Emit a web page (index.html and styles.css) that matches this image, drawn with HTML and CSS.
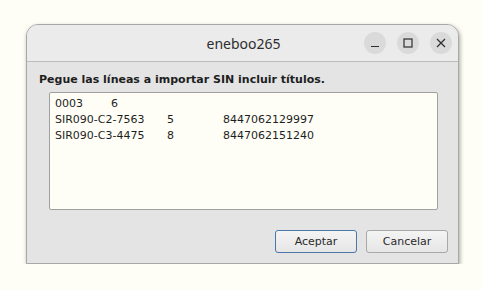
FILE: index.html
```html
<!DOCTYPE html>
<html lang="es">
<head>
    <meta charset="UTF-8">
    <title>eneboo265</title>
    <link rel="stylesheet" href="styles.css">
</head>
<body>

    <div class="ventana">
        <div class="titulo">
            <span class="titulo-texto">eneboo265</span>
            <div class="controles">
                <span class="control">
                    <svg width="10" height="10" viewBox="0 0 10 10"><path d="M1 8.5h8" stroke="#2e2e2e" stroke-width="1.2"/></svg>
                </span>
                <span class="control">
                    <svg width="10" height="10" viewBox="0 0 10 10"><rect x="1" y="1" width="8" height="8" fill="none" stroke="#2e2e2e" stroke-width="1.2"/></svg>
                </span>
                <span class="control">
                    <svg width="10" height="10" viewBox="0 0 10 10"><path d="M1 1L9 9M9 1L1 9" stroke="#2e2e2e" stroke-width="1.2"/></svg>
                </span>
            </div>
        </div>

        <div class="contenido">
            <p class="etiqueta">Pegue las líneas a importar SIN incluir títulos.</p>
            <div class="lineas">0003&#9;6
SIR090-C2-7563&#9;5&#9;8447062129997
SIR090-C3-4475&#9;8&#9;8447062151240</div>

            <div class="botones">
                <button class="boton principal" type="button">Aceptar</button>
                <button class="boton" type="button">Cancelar</button>
            </div>
        </div>
    </div>

</body>
</html>
```

FILE: styles.css
```css
body {
    margin: 0;
    background-color: #fefef6;
    font-family: "DejaVu Sans", Verdana, sans-serif;
}

.ventana {
    margin: 24px 0 0 26px;
    width: 433px;
    height: 240px;
    background-color: #e4e4e4;
    border: 1px solid #a8a8a8;
    border-radius: 12px 12px 0 0;
    box-sizing: border-box;
    box-shadow: 1px 2px 4px rgba(0, 0, 0, 0.35);
    display: flex;
    flex-direction: column;
    overflow: hidden;
}

.titulo {
    height: 37px;
    background-color: #ebebeb;
    border-bottom: 1px solid #bdbdbd;
    box-sizing: border-box;
    display: flex;
    align-items: center;
    justify-content: center;
    position: relative;
}

.titulo-texto {
    font-family: "Noto Sans", sans-serif;
    font-size: 14px;
    color: #2e2e2e;
    margin-left: 2px;
}

.controles {
    position: absolute;
    right: 6px;
    top: 7px;
    display: flex;
    gap: 11px;
}

.control {
    width: 22px;
    height: 22px;
    border-radius: 50%;
    background-color: #dadada;
    display: flex;
    align-items: center;
    justify-content: center;
}

.contenido {
    flex: 1;
    padding: 10px 10px 10px 12px;
    display: flex;
    flex-direction: column;
}

.etiqueta {
    margin: 0 0 4px 0;
    font-size: 11px;
    font-weight: bold;
    color: #1e1e1e;
    line-height: 16px;
}

.lineas {
    margin-left: 10px;
    width: 389px;
    height: 118px;
    box-sizing: border-box;
    background-color: #fefef6;
    border: 1px solid #a0a0a0;
    border-radius: 2px;
    padding: 3px 5px;
    font-size: 11px;
    line-height: 16px;
    color: #1e1e1e;
    white-space: pre;
    tab-size: 56px;
}

.botones {
    margin-top: auto;
    display: flex;
    justify-content: flex-end;
    gap: 9px;
}

.boton {
    width: 82px;
    height: 23px;
    font-family: "DejaVu Sans", Verdana, sans-serif;
    font-size: 11px;
    color: #2a2a2a;
    background: linear-gradient(#f4f4f4, #e6e6e6);
    border: 1px solid #a8a8a8;
    border-radius: 3px;
    padding: 0;
}

.principal {
    border-color: #4a78a8;
}
```
